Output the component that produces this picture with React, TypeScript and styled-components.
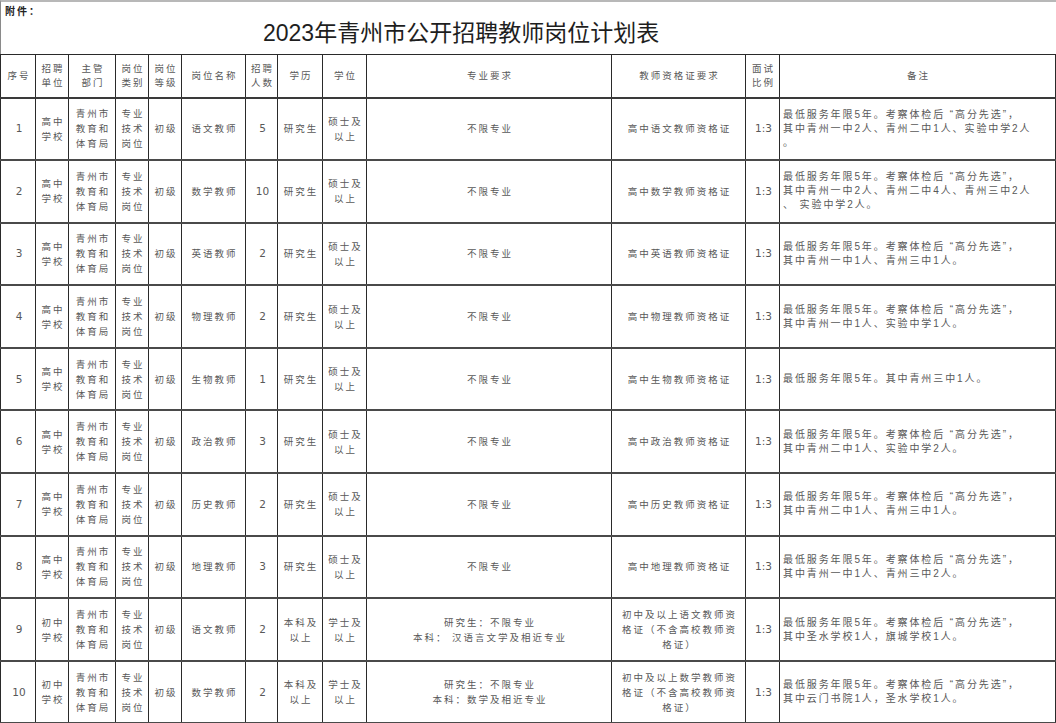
import React from 'react';
import styled, { createGlobalStyle } from 'styled-components';

const GlobalStyle = createGlobalStyle`
  html, body {
    margin: 0;
    padding: 0;
    background: #ffffff;
  }
  body {
    font-family: 'Liberation Sans', 'Noto Sans CJK SC', sans-serif;
  }
`;

// Layout
const Page = styled.div`
  width: 1056px;
  height: 723px;
  overflow: hidden;
  background: #fff;
`;

const TitleBar = styled.div`
  height: 52px;
  border-top: 2px solid #b8b8b8;
  border-left: 1px solid #8a8a8a;
  display: flex;
  flex-direction: column;
`;

const Attachment = styled.div`
  font-family: 'Noto Sans CJK SC', sans-serif;
  font-weight: 700;
  font-size: 10px;
  letter-spacing: 2px;
  color: #222;
  padding: 2px 0 0 4px;
  line-height: 14px;
`;

const Title = styled.h1`
  margin: 0;
  padding-left: 262px;
  font-family: 'Liberation Sans', 'Noto Sans CJK SC', sans-serif;
  font-weight: 400;
  font-size: 23px;
  line-height: 30px;
  color: #1e1e1e;
  white-space: nowrap;
`;

const Table = styled.table`
  width: 1055px;
  border-collapse: collapse;
  table-layout: fixed;
  font-family: 'Liberation Sans', 'Noto Sans CJK SC', sans-serif;
  color: #585858;
`;

const HeadRow = styled.tr`
  height: 43px;
`;

const BodyRow = styled.tr`
  height: 62.6px;
`;

const HeadCell = styled.th`
  border: 1px solid #2a2a2a;
  border-bottom: 2px solid #3a3a3a;
  font-weight: 400;
  font-size: 9.5px;
  line-height: 14px;
  letter-spacing: 2px;
  padding: 0 0 0 2px;
  text-align: center;
  vertical-align: middle;
`;

const Cell = styled.td<{ $left?: boolean; $wide?: boolean }>`
  border-left: 1px solid #2a2a2a;
  border-right: 1px solid #2a2a2a;
  border-bottom: 2px solid #4a4a4a;
  font-size: ${p => (p.$wide ? '10px' : '9.5px')};
  line-height: ${p => (p.$wide ? '14px' : '15px')};
  letter-spacing: ${p => (p.$wide ? '1.9px' : '2px')};
  padding: ${p => (p.$left ? '0 0 0 3px' : '0 0 0 2px')};
  text-align: ${p => (p.$left ? 'left' : 'center')};
  vertical-align: middle;
  white-space: nowrap;
`;

const Line = styled.div`
  display: block;
`;

const Num = styled.span`
  letter-spacing: 0;
  font-size: 10.5px;
  font-family: 'DejaVu Sans', 'Noto Sans CJK SC', sans-serif;
`;

const cols = [35, 33, 47, 33, 33, 64, 32, 45, 44, 245, 134, 34, 276];

const headers: string[][] = [
  ['序号'],
  ['招聘', '单位'],
  ['主管', '部门'],
  ['岗位', '类别'],
  ['岗位', '等级'],
  ['岗位名称'],
  ['招聘', '人数'],
  ['学历'],
  ['学位'],
  ['专业要求'],
  ['教师资格证要求'],
  ['面试', '比例'],
  ['备注'],
];

type Row = {
  unit: string[];
  name: string;
  count: string;
  edu: string[];
  degree: string[];
  major: string[];
  cert: string[];
  notes: string[];
};

const lead = '最低服务年限5年。考察体检后 “高分先选”，';

const highSchool = (name: string, count: string, subject: string, notes: string[]): Row => ({
  unit: ['高中', '学校'],
  name,
  count,
  edu: ['研究生'],
  degree: ['硕士及', '以上'],
  major: ['不限专业'],
  cert: [`高中${subject}教师资格证`],
  notes,
});

const rows: Row[] = [
  highSchool('语文教师', '5', '语文', [lead, '其中青州一中2人、青州二中1人、实验中学2人', '。']),
  highSchool('数学教师', '10', '数学', [lead, '其中青州一中2人、青州二中4人、青州三中2人', '、 实验中学2人。']),
  highSchool('英语教师', '2', '英语', [lead, '其中青州一中1人、青州三中1人。']),
  highSchool('物理教师', '2', '物理', [lead, '其中青州一中1人、实验中学1人。']),
  highSchool('生物教师', '1', '生物', ['最低服务年限5年。其中青州三中1人。']),
  highSchool('政治教师', '3', '政治', [lead, '其中青州二中1人、实验中学2人。']),
  highSchool('历史教师', '2', '历史', [lead, '其中青州二中1人、青州三中1人。']),
  highSchool('地理教师', '3', '地理', [lead, '其中青州一中1人、青州三中2人。']),
  {
    unit: ['初中', '学校'],
    name: '语文教师',
    count: '2',
    edu: ['本科及', '以上'],
    degree: ['学士及', '以上'],
    major: ['研究生：不限专业', '本科： 汉语言文学及相近专业'],
    cert: ['初中及以上语文教师资', '格证（不含高校教师资', '格证）'],
    notes: [lead, '其中圣水学校1人，旗城学校1人。'],
  },
  {
    unit: ['初中', '学校'],
    name: '数学教师',
    count: '2',
    edu: ['本科及', '以上'],
    degree: ['学士及', '以上'],
    major: ['研究生：不限专业', '本科：数学及相近专业'],
    cert: ['初中及以上数学教师资', '格证（不含高校教师资', '格证）'],
    notes: [lead, '其中云门书院1人，圣水学校1人。'],
  },
];

const Lines = ({ items }: { items: string[] }) => (
  <>
    {items.map((t, i) => (
      <Line key={i}>{t}</Line>
    ))}
  </>
);

function App() {
  return (
    <Page>
      <GlobalStyle />
      <TitleBar>
        <Attachment>附件：</Attachment>
        <Title>2023年青州市公开招聘教师岗位计划表</Title>
      </TitleBar>
      <Table>
        <colgroup>
          {cols.map((w, i) => (
            <col key={i} style={{ width: w }} />
          ))}
        </colgroup>
        <thead>
          <HeadRow>
            {headers.map((h, i) => (
              <HeadCell key={i}>
                <Lines items={h} />
              </HeadCell>
            ))}
          </HeadRow>
        </thead>
        <tbody>
          {rows.map((r, i) => (
            <BodyRow key={i}>
              <Cell>
                <Num>{i + 1}</Num>
              </Cell>
              <Cell>
                <Lines items={r.unit} />
              </Cell>
              <Cell>
                <Lines items={['青州市', '教育和', '体育局']} />
              </Cell>
              <Cell>
                <Lines items={['专业', '技术', '岗位']} />
              </Cell>
              <Cell>初级</Cell>
              <Cell>{r.name}</Cell>
              <Cell>
                <Num>{r.count}</Num>
              </Cell>
              <Cell>
                <Lines items={r.edu} />
              </Cell>
              <Cell>
                <Lines items={r.degree} />
              </Cell>
              <Cell>
                <Lines items={r.major} />
              </Cell>
              <Cell>
                <Lines items={r.cert} />
              </Cell>
              <Cell>
                <Num>1:3</Num>
              </Cell>
              <Cell $left $wide>
                <Lines items={r.notes} />
              </Cell>
            </BodyRow>
          ))}
        </tbody>
      </Table>
    </Page>
  );
}

export default App;
